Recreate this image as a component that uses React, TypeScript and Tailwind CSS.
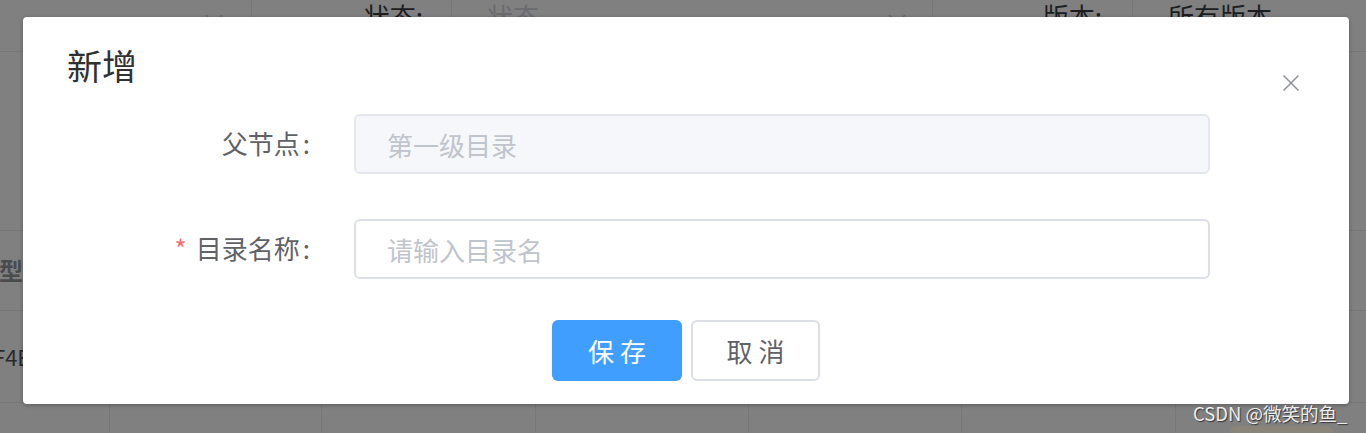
import React from "react";

const Chevron = ({ className }: { className?: string }) => (
  <svg className={className} width="18" height="10" viewBox="0 0 18 10" fill="none">
    <path d="M1 1 L9 9 L17 1" stroke="#6a6a6a" strokeWidth="1.5" />
  </svg>
);

export default function App() {
  return (
    <div className="w-[1366px] h-[433px] relative overflow-hidden bg-[#808080] font-['Noto_Sans_CJK_SC','Noto_Sans',sans-serif]">
      {/* background page (dimmed) */}
      <div className="flex h-[52px] border-b border-[#75777b]">
        <div className="w-[252px] border-r border-[#75777b] flex justify-end pr-[28px] pt-[14px]">
          <Chevron />
        </div>
        <div className="w-[200px] border-r border-[#75777b] flex justify-end pr-[28px] text-[26px] leading-[30px] text-[#1c1d1f] pt-[1px]">
          状态:
        </div>
        <div className="w-[481px] border-r border-[#75777b] flex justify-between pl-[35px] pr-[26px] text-[26px] leading-[30px] pt-[1px]">
          <span className="text-[#6a6b6e]">状态</span>
          <Chevron className="mt-[13px]" />
        </div>
        <div className="w-[200px] border-r border-[#75777b] flex justify-end pr-[30px] text-[26px] leading-[30px] text-[#1c1d1f] pt-[1px]">
          版本:
        </div>
        <div className="flex-1 pl-[35px] text-[26px] leading-[30px] text-[#1c1d1f] pt-[1px]">所有版本</div>
      </div>
      <div className="h-[179px] border-b border-[#75777b]" />
      <div className="grid grid-cols-[110px_212px_214px_213px_213px_214px_1fr]">
        <div className="h-[80px] border-b border-r border-[#75777b] flex items-center text-[24px] font-bold text-[#4a4b4d] overflow-hidden">
          <span className="-ml-[25px] -mt-[2px]">类型</span>
        </div>
        <div className="h-[80px] border-b border-r border-[#75777b]" />
        <div className="h-[80px] border-b border-r border-[#75777b]" />
        <div className="h-[80px] border-b border-r border-[#75777b]" />
        <div className="h-[80px] border-b border-r border-[#75777b]" />
        <div className="h-[80px] border-b border-r border-[#75777b]" />
        <div className="h-[80px] border-b border-[#75777b]" />
        <div className="h-[92px] border-b border-r border-[#75777b] flex items-center text-[22px] text-[#2a2b2d] overflow-hidden">
          <span className="-ml-[7px]">F4E9A</span>
        </div>
        <div className="h-[92px] border-b border-r border-[#75777b]" />
        <div className="h-[92px] border-b border-r border-[#75777b]" />
        <div className="h-[92px] border-b border-r border-[#75777b]" />
        <div className="h-[92px] border-b border-r border-[#75777b]" />
        <div className="h-[92px] border-b border-r border-[#75777b]" />
        <div className="h-[92px] border-b border-[#75777b]" />
        <div className="h-[40px] border-r border-[#75777b]" />
        <div className="h-[40px] border-r border-[#75777b]" />
        <div className="h-[40px] border-r border-[#75777b]" />
        <div className="h-[40px] border-r border-[#75777b]" />
        <div className="h-[40px] border-r border-[#75777b]" />
        <div className="h-[40px] border-r border-[#75777b]" />
        <div className="h-[40px] pl-[54px] pt-[23px]">
          <div className="w-[103px] h-[30px] rounded-[6px] bg-[#8a8579]" />
        </div>
      </div>

      {/* dialog */}
      <div className="absolute left-[23px] top-[17px] w-[1326px] h-[387px] bg-white rounded-[4px] shadow-[0_1px_4px_rgba(0,0,0,0.3)]">
        <div className="pl-[44px] pt-[30px] text-[35px] leading-[36px] text-[#303133]">新增</div>
        <button className="absolute right-[50px] top-[58px] w-[16px] h-[16px]">
          <svg width="16" height="16" viewBox="0 0 16 16" fill="none">
            <path d="M0.5 0.5 L15.5 15.5 M15.5 0.5 L0.5 15.5" stroke="#909399" strokeWidth="1.5" />
          </svg>
        </button>

        <div className="mt-[31px] flex flex-col gap-[45px]">
          <div className="flex items-center">
            <div className="w-[331px] pr-[44px] text-right text-[26px] text-[#606266] -mt-[3px]">
              父节点<span className="ml-[3px]">:</span>
            </div>
            <div className="w-[856px] h-[60px] rounded-[6px] border-2 border-[#e4e7ed] bg-[#f5f7fa] flex items-center pl-[31px] text-[26px] text-[#c0c4cc]">
              第一级目录
            </div>
          </div>
          <div className="flex items-center">
            <div className="w-[331px] pr-[44px] text-right text-[26px] text-[#606266] -mt-[3px]">
              <span className="text-[#f56c6c] mr-[9px]">*</span>目录名称<span className="ml-[3px]">:</span>
            </div>
            <div className="w-[856px] h-[60px] rounded-[6px] border-2 border-[#dcdfe6] bg-white flex items-center pl-[31px] text-[26px] text-[#c0c4cc]">
              请输入目录名
            </div>
          </div>
        </div>

        <div className="mt-[41px] flex justify-center gap-[9px]">
          <button className="w-[130px] h-[61px] rounded-[6px] bg-[#409eff] text-white text-[26px]">保 存</button>
          <button className="w-[129px] h-[61px] rounded-[6px] border-2 border-[#dcdfe6] bg-white text-[#606266] text-[26px]">取 消</button>
        </div>
      </div>

      {/* watermark */}
      <div className="absolute left-[1193px] top-[400px] text-[18.5px] leading-[26px] text-[#ececec] [text-shadow:1px_1px_1px_rgba(0,0,0,0.6)] whitespace-nowrap">
        CSDN @微笑的鱼_
      </div>
    </div>
  );
}
